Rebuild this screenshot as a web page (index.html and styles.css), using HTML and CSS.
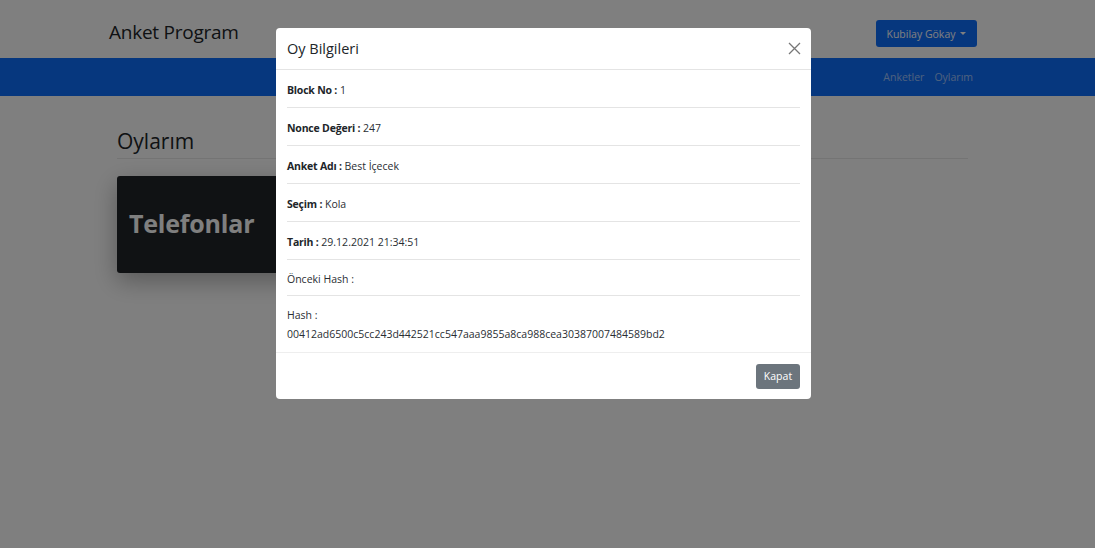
FILE: index.html
```html
<!DOCTYPE html>
<html lang="tr">
<head>
<meta charset="utf-8">
<title>Anket Program</title>
<link rel="stylesheet" href="styles.css">
</head>
<body>
<header class="topbar">
  <div class="container topbar-inner">
    <div class="brand">Anket Program</div>
    <button class="user-btn">Kubilay Gökay <span class="caret"></span></button>
  </div>
</header>
<nav class="navbar">
  <div class="container nav-inner">
    <a class="nav-link">Anketler</a>
    <a class="nav-link">Oylarım</a>
  </div>
</nav>
<main class="container main">
  <h2 class="page-title">Oylarım</h2>
  <div class="cards">
    <div class="card">Telefonlar</div>
  </div>
</main>

<div class="backdrop"></div>
<div class="modal">
  <div class="modal-header">
    <h5 class="modal-title">Oy Bilgileri</h5>
    <svg class="close" width="13" height="13" viewBox="0 0 13 13"><path d="M1 1L12 12M12 1L1 12" stroke="#777" stroke-width="1.3" fill="none"/></svg>
  </div>
  <div class="modal-body">
    <div class="row"><b>Block No :</b> 1</div>
    <div class="row"><b>Nonce Değeri :</b> 247</div>
    <div class="row"><b>Anket Adı :</b> Best İçecek</div>
    <div class="row"><b>Seçim :</b> Kola</div>
    <div class="row"><b>Tarih :</b> 29.12.2021 21:34:51</div>
    <div class="row row-short">Önceki Hash :</div>
    <div class="row row-last">
      <div>Hash :</div>
      <div>00412ad6500c5cc243d442521cc547aaa9855a8ca988cea30387007484589bd2</div>
    </div>
  </div>
  <div class="modal-footer">
    <button class="btn-secondary">Kapat</button>
  </div>
</div>
</body>
</html>
```

FILE: styles.css
```css
* { box-sizing: border-box; }
html, body { margin: 0; padding: 0; }
body {
  font-family: "Open Sans", "Noto Sans", sans-serif;
  color: #212529;
  background: #fff;
  width: 1095px;
  height: 548px;
  overflow: hidden;
}
.container {
  margin-left: 109px;
  width: 868px;
}
.topbar {
  height: 58px;
}
.topbar-inner {
  height: 58px;
  display: flex;
  align-items: flex-start;
  justify-content: space-between;
  padding-top: 20px;
}
.brand {
  font-size: 19px;
  line-height: 24px;
  letter-spacing: -0.25px;
  margin-top: 0;
  color: #212529;
}
.user-btn {
  background: #0d6efd;
  color: #fff;
  border: none;
  border-radius: 3px;
  height: 27px;
  width: 101px;
  font-family: inherit;
  font-size: 10.5px;
  padding: 0;
  display: flex;
  align-items: center;
  justify-content: center;
  gap: 5px;
}
.caret {
  width: 0; height: 0;
  border-left: 3.5px solid transparent;
  border-right: 3.5px solid transparent;
  border-top: 3.5px solid #fff;
  margin-top: -1px;
}
.navbar {
  background: #0d6efd;
  height: 38px;
}
.nav-inner {
  height: 38px;
  display: flex;
  justify-content: flex-end;
  align-items: center;
  gap: 10px;
  padding-right: 4px;
}
.nav-link {
  color: rgba(255,255,255,0.6);
  font-size: 10.5px;
}
.main {
  padding-left: 8px;
  padding-right: 9px;
}
.page-title {
  margin: 0;
  padding-top: 30px;
  font-size: 21px;
  font-weight: 400;
  line-height: 30px;
  padding-bottom: 2px;
  border-bottom: 1px solid #e9e9e9;
}
.cards {
  padding-top: 17px;
  display: flex;
}
.card {
  width: 215px;
  height: 97px;
  background: #212529;
  border-radius: 3px;
  color: #fff;
  font-weight: 700;
  font-size: 25px;
  letter-spacing: -0.2px;
  display: flex;
  align-items: center;
  padding-left: 12px;
  padding-bottom: 3px;
  box-shadow: 0 8px 24px rgba(0,0,0,0.3);
}
.backdrop {
  position: fixed;
  inset: 0;
  background: rgba(0,0,0,0.5);
}
.modal {
  position: fixed;
  left: 276px;
  top: 28px;
  width: 535px;
  height: 371px;
  background: #fff;
  border-radius: 4px;
  font-size: 10.5px;
  color: #2a2e33;
}
.modal-header {
  height: 42px;
  border-bottom: 1px solid #e4e4e4;
  display: flex;
  align-items: center;
  justify-content: space-between;
  padding: 0 10px 0 11px;
  color: #212529;
}
.modal-title {
  margin: 0;
  font-size: 14.5px;
  font-weight: 400;
}
.close { display: block; }
.modal-body {
  padding: 0 11px;
}
.row {
  padding: 12px 0 8px;
  line-height: 17px;
  border-bottom: 1px solid #e4e4e4;
}
.row b {
  font-weight: 700;
  letter-spacing: -0.2px;
  color: #212529;
}
.row-short { padding: 11px 0 7px; }
.row-last {
  border-bottom: none;
  padding: 10px 0 8px;
  line-height: 19px;
}
.modal-footer {
  border-top: 1px solid #eeeeee;
  height: 47px;
  display: flex;
  justify-content: flex-end;
  align-items: center;
  padding: 0 11px;
}
.btn-secondary {
  background: #6c757d;
  color: #fff;
  border: none;
  border-radius: 3px;
  font-family: inherit;
  font-size: 10.5px;
  width: 44px;
  height: 25px;
  padding: 0;
}
```
